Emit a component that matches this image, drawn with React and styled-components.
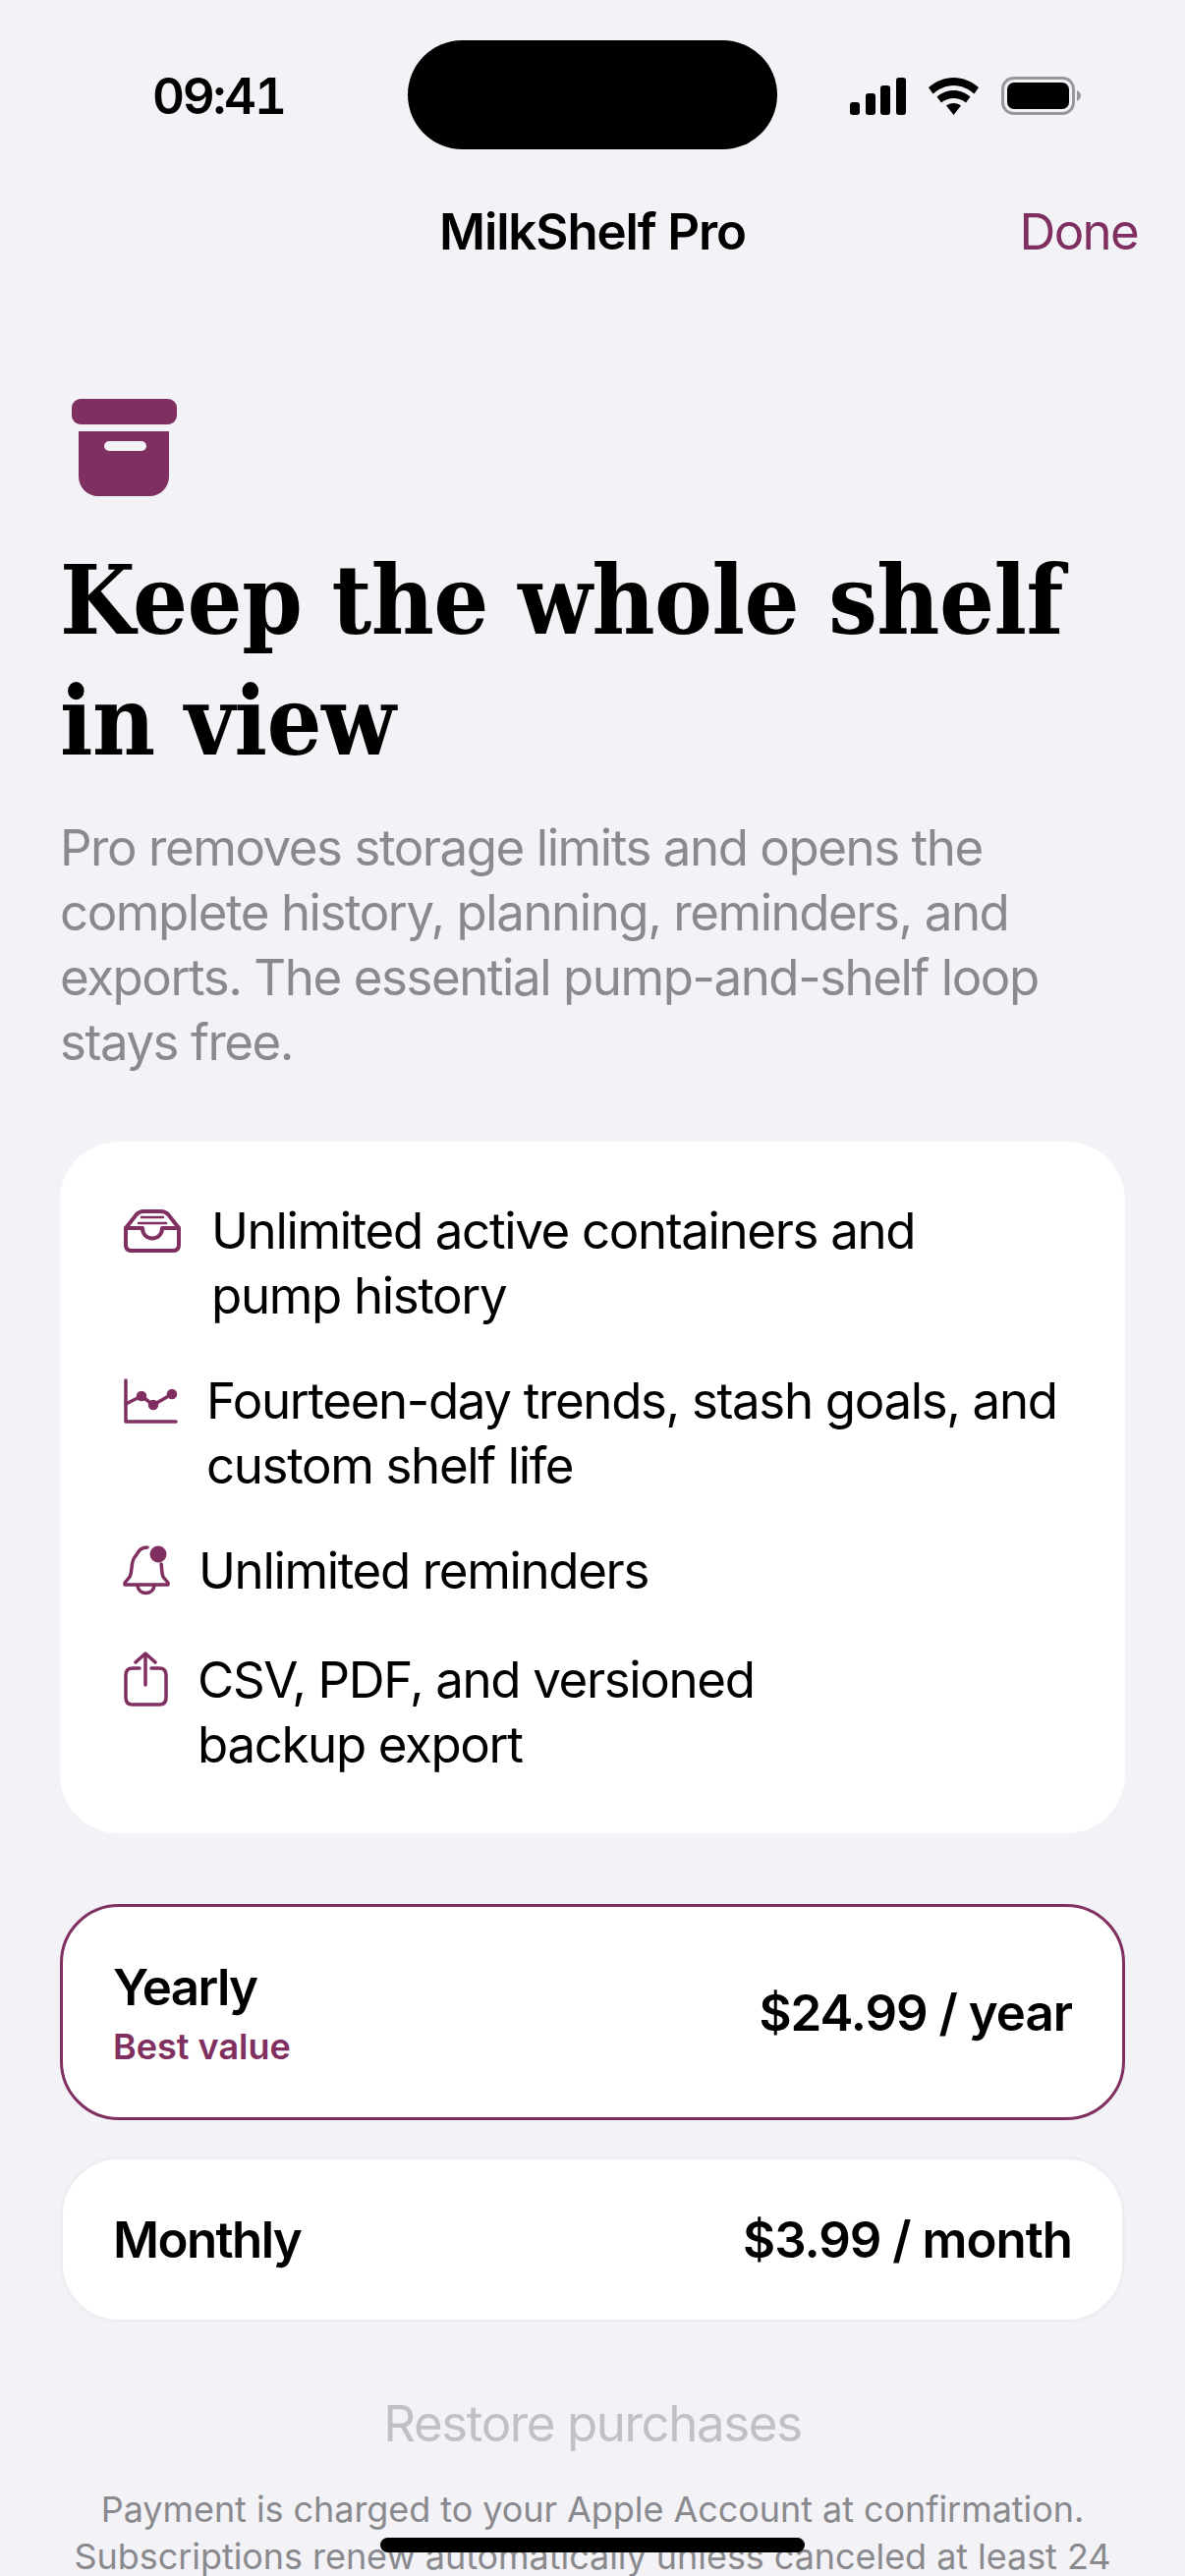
import React from "react";
import styled, { createGlobalStyle } from "styled-components";

const PLUM = "#7f2f60";

const Global = createGlobalStyle`
  html, body { margin: 0; padding: 0; background: #f2f2f7; }
  body { width: 1206px; height: 2622px; overflow: hidden; font-family: Inter, "Liberation Sans", sans-serif; color: #000; }
`;
const Screen = styled.div`
  position: relative; width: 1206px; height: 2622px; overflow: hidden; background: #f2f2f7;
`;
const Island = styled.div`
  position: absolute; left: 415px; top: 41px; width: 376px; height: 111px; border-radius: 56px; background: #000;
`;
const HomeBar = styled.div`
  position: absolute; left: 387px; top: 2583px; width: 432px; height: 15px; border-radius: 8px; background: #000;
`;
const StatusBar = styled.div`
  height: 193px; display: flex; justify-content: space-between; align-items: flex-start;
  padding: 70px 106px 0 155px; box-sizing: border-box;
`;
const Time = styled.div`
  font-size: 51px; font-weight: 600; line-height: 56px; letter-spacing: -2.2px; font-variant-numeric: tabular-nums;
`;
const StatusIcons = styled.div`
  display: flex; align-items: center; gap: 23px; padding-top: 8px;
`;
const Nav = styled.div`
  display: grid; grid-template-columns: 1fr auto 1fr; align-items: center; height: 84px; padding: 0 48px 0 0;
`;
const NavTitle = styled.div`
  grid-column: 2; font-size: 51px; font-weight: 600; letter-spacing: -1.1px; padding-left: 48px;
`;
const Done = styled.div`
  grid-column: 3; justify-self: end; font-size: 51px; color: ${PLUM}; letter-spacing: -1.7px;
`;
const Content = styled.div`
  padding: 129px 61px 0;
`;
const HeroIcon = styled.svg`
  display: block; margin-left: 12px;
`;
const Title = styled.h1`
  margin: 44px 0 0; font-family: "DejaVu Serif Condensed", "DejaVu Serif", serif; font-stretch: condensed; font-size: 98px; line-height: 123px; font-weight: 700; letter-spacing: -0.5px;
`;
const Lead = styled.p`
  margin: 35px 0 0; font-size: 51px; line-height: 66px; color: #8a8a8e; letter-spacing: -1.45px;
`;
const FeatureCard = styled.div`
  margin-top: 68px; background: #fff; border-radius: 60px; padding: 58px 60px 57px 64px;
  display: flex; flex-direction: column; gap: 41px;
`;
const Feature = styled.div`
  display: flex; align-items: flex-start; gap: ${p => p.$gap}px; margin-top: ${p => p.$shift || 0}px;
`;
const FeatureIcon = styled.svg`
  flex: none; margin-top: ${p => p.$top}px;
`;
const FeatureText = styled.div`
  font-size: 51px; line-height: 66px; letter-spacing: -1.35px;
`;
const Plans = styled.div`
  margin-top: 72px; display: flex; flex-direction: column; gap: 37px;
`;
const Plan = styled.div`
  box-sizing: border-box; height: ${p => p.$h}px; background: #fff; border-radius: 60px;
  border: 3px solid ${p => (p.$selected ? PLUM : "#eeeef2")};
  display: flex; justify-content: space-between; align-items: center; padding: 0 51px;
`;
const PlanLabels = styled.div`
  padding-top: 4px;
`;
const PlanName = styled.div`
  font-size: 51px; line-height: 60px; font-weight: 600; letter-spacing: -1.6px;
`;
const PlanNote = styled.div`
  font-size: 36px; line-height: 48px; font-weight: 600; color: ${PLUM}; margin-top: 6px;
`;
const Price = styled.div`
  font-size: 51px; font-weight: 600; letter-spacing: -1px;
`;
const Restore = styled.div`
  margin-top: 70px; text-align: center; font-size: 51px; line-height: 66px; color: #c0c0c6; letter-spacing: -1.4px;
`;
const Legal = styled.div`
  margin: 30px -6px 0; text-align: center; font-size: 36px; line-height: 48px; color: #8a8a8e; letter-spacing: -0.06px;
`;

const s = { fill: "none", stroke: PLUM, strokeWidth: 3.5, strokeLinecap: "round", strokeLinejoin: "round" };

export default function App() {
  return (
    <Screen>
      <Global />
      <StatusBar>
        <Time>09:41</Time>
        <StatusIcons>
          <svg width="57" height="38" viewBox="0 0 57 38">
            <rect x="0" y="25" width="10" height="13" rx="3" />
            <rect x="16" y="16" width="10" height="22" rx="3" />
            <rect x="31" y="8" width="10" height="30" rx="3" />
            <rect x="47" y="0" width="10" height="38" rx="3" />
          </svg>
          <svg width="51" height="38" viewBox="0 0 51 38">
            <path d="M25.5 0C16 0 7.500 3.800 0 10l4.500 6.500C10.500 11.500 17.500 8 25.500 8s15 3.500 21 8.500L51 10C43.500 3.800 35 0 25.500 0z" />
            <path d="M25.500 13c-6.500 0-12 2.500-17 6.500l4.500 6c3.500-2.800 7.800-4.500 12.500-4.500s9 1.700 12.500 4.500l4.500-6c-5-4-10.500-6.500-17-6.500z" />
            <path d="M25.500 26c-3 0-5.500 1-7.500 2.500L25.500 38 33 28.500C31 27 28.500 26 25.500 26z" />
          </svg>
          <svg width="81" height="39" viewBox="0 0 81 39">
            <rect x="1.500" y="1.500" width="72" height="36" rx="11" fill="none" stroke="#98989c" strokeWidth="3" />
            <rect x="6" y="6" width="63" height="27" rx="7" />
            <path d="M77 14c2.500 1 4 3 4 5.500S79.500 24 77 25z" fill="#98989c" />
          </svg>
        </StatusIcons>
      </StatusBar>
      <Island />
      <Nav>
        <NavTitle>MilkShelf Pro</NavTitle>
        <Done>Done</Done>
      </Nav>
      <Content>
        <HeroIcon width="107" height="99" viewBox="0 0 107 99">
          <rect x="0" y="0" width="107" height="26" rx="9" fill={PLUM} />
          <path fillRule="evenodd" fill={PLUM} d="M7 33h92v46a20 20 0 0 1-20 20H27A20 20 0 0 1 7 79zM38 43a5 5 0 0 0 0 10h33a5 5 0 0 0 0-10z" />
        </HeroIcon>
        <Title>Keep the whole shelf<br />in view</Title>
        <Lead>
          Pro removes storage limits and opens the<br />
          complete history, planning, reminders, and<br />
          exports. The essential pump-and-shelf loop<br />
          stays free.
        </Lead>
        <FeatureCard>
          <Feature $gap={30}>
            <FeatureIcon $top={11} width="60" height="44" viewBox="0 0 60 44" {...s} strokeWidth="4">
              <path d="M3 19L14 5Q17 2 21 2H39Q43 2 46 5L57 19V36Q57 42 51 42H9Q3 42 3 36Z" />
              <path d="M3 19H20C20 33 40 33 40 19H57" />
              <path d="M19 8H41M16 14H44" strokeWidth="2.500" />
            </FeatureIcon>
            <FeatureText>Unlimited active containers and<br />pump history</FeatureText>
          </Feature>
          <Feature $gap={29}>
            <FeatureIcon $top={10} width="56" height="48" viewBox="0 0 56 48" {...s}>
              <path d="M3 2V44H54" />
              <path d="M3 26L19 18L31 27L50 16" />
              <circle cx="19" cy="18" r="3.500" fill={PLUM} />
              <circle cx="31" cy="27" r="3.500" fill={PLUM} />
              <circle cx="50" cy="16" r="3.500" fill={PLUM} />
            </FeatureIcon>
            <FeatureText>Fourteen-day trends, stash goals, and<br />custom shelf life</FeatureText>
          </Feature>
          <Feature $gap={28}>
            <FeatureIcon $top={6} width="49" height="54" viewBox="0 0 49 54" {...s}>
              <path d="M25 3C16 3 16 9 12 13C8 18 10 27 7 33L2 39V41H46V39L41 33C39 28 40 24 39 20" />
              <path d="M15 42C16 52 31 52 32 42" />
              <circle cx="36" cy="10" r="8.500" fill={PLUM} stroke="none" />
            </FeatureIcon>
            <FeatureText>Unlimited reminders</FeatureText>
          </Feature>
          <Feature $gap={29} $shift={4}>
            <FeatureIcon $top={4} width="47" height="58" viewBox="0 0 47 58" {...s}>
              <path d="M17 17H10Q3 17 3 24V47Q3 54 10 54H37Q44 54 44 47V24Q44 17 37 17H29" />
              <path d="M23 34V3M13 11L23 2L33 11" />
            </FeatureIcon>
            <FeatureText>CSV, PDF, and versioned<br />backup export</FeatureText>
          </Feature>
        </FeatureCard>
        <Plans>
          <Plan $selected $h={220}>
            <PlanLabels>
              <PlanName>Yearly</PlanName>
              <PlanNote>Best value</PlanNote>
            </PlanLabels>
            <Price>$24.99 / year</Price>
          </Plan>
          <Plan $h={169}>
            <PlanName>Monthly</PlanName>
            <Price>$3.99 / month</Price>
          </Plan>
        </Plans>
        <Restore>Restore purchases</Restore>
        <Legal>
          Payment is charged to your Apple Account at confirmation.<br />
          Subscriptions renew automatically unless canceled at least 24
        </Legal>
      </Content>
      <HomeBar />
    </Screen>
  );
}
